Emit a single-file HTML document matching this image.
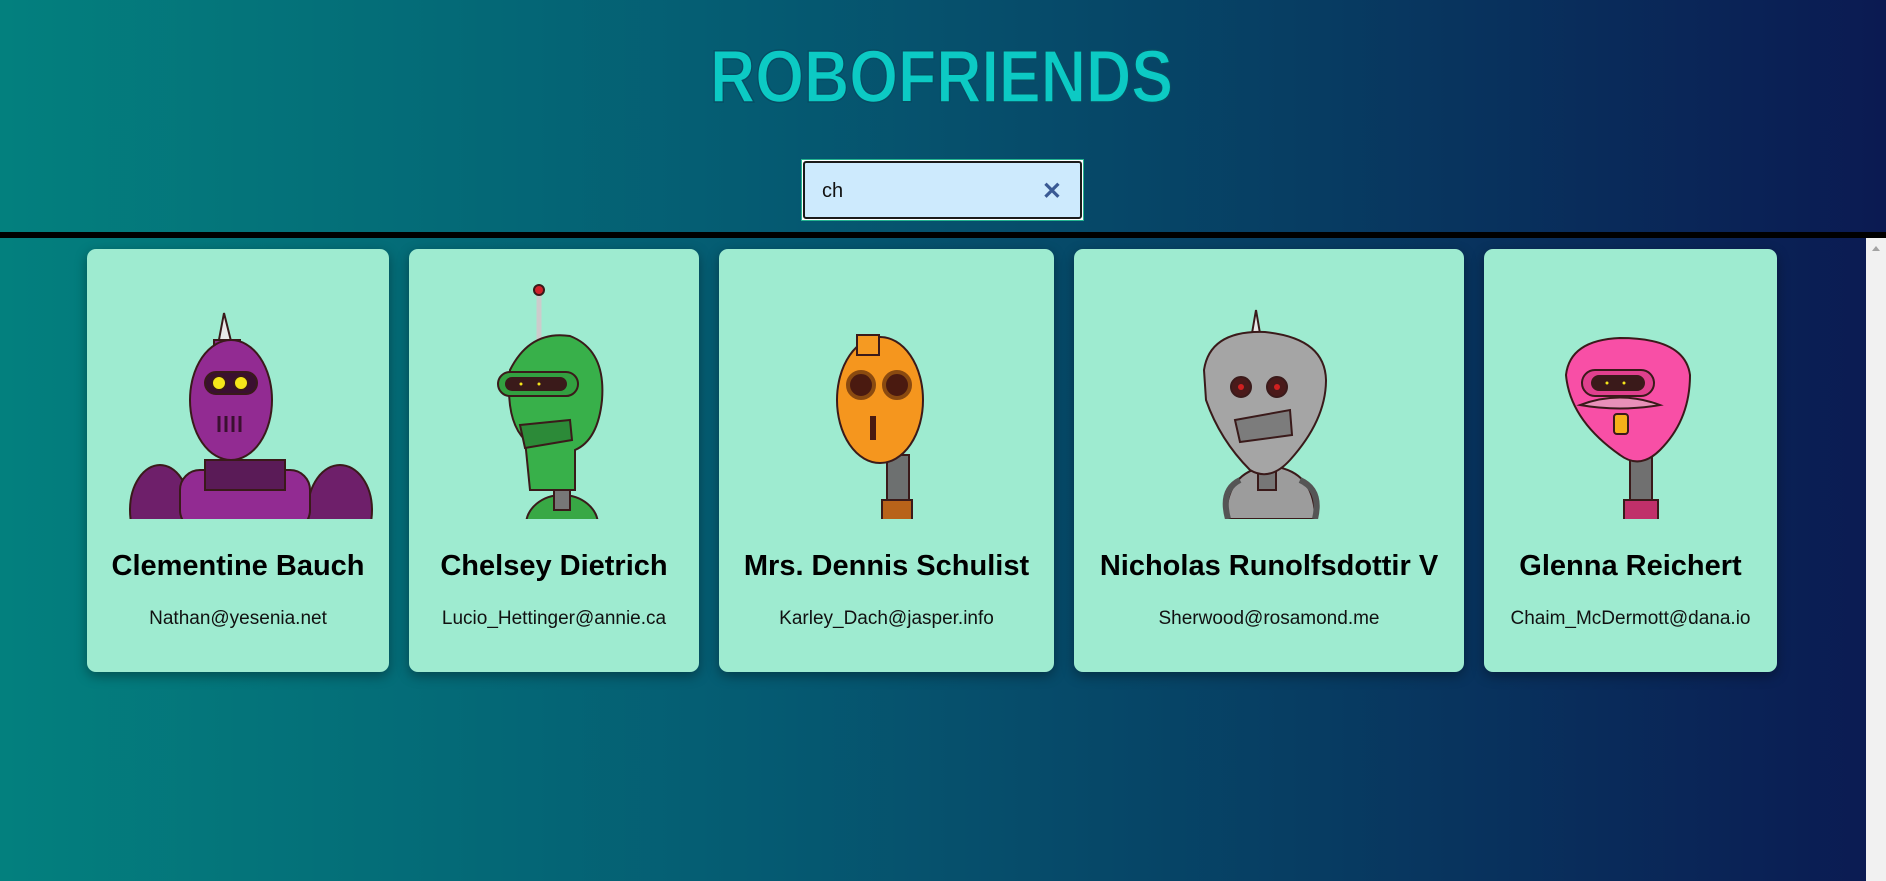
<!DOCTYPE html>
<html><head><meta charset="utf-8"><style>
*{margin:0;padding:0;box-sizing:border-box}
body{width:1886px;height:881px;overflow:hidden;position:relative;font-family:"Liberation Sans",sans-serif;background:linear-gradient(90deg,#03807e 0%,#055b72 40%,#073c62 70%,#0b1a52 100%)}
.line{position:absolute;left:0;top:232px;width:1886px;height:6px;background:#000}
.sb{position:absolute;left:1866px;top:238px;width:20px;height:643px;background:#f1f1f1}
.sb:before{content:"";position:absolute;left:6px;top:8px;border:4px solid transparent;border-bottom:5px solid #a3a3a3;border-top:0}
.search{position:absolute;left:801px;top:159px;width:283px;height:62px;border:1px solid #22b38f;background:#fff}
.search div{position:absolute;inset:1px;border:2px solid #1a1a1a;border-radius:3px;background:#cdeafd;font-size:20px;color:#111;padding:17px 0 0 17px}
.search span{position:absolute;right:18px;top:14px;color:#3a5a94;font-size:24px;font-weight:bold}
.card{position:absolute;top:249px;height:423px;background:#9eebd0;border-radius:9px;box-shadow:0 4px 12px rgba(0,0,0,.35);text-align:center}
.card h2{position:absolute;left:0;right:0;top:301px;font-size:29px;font-weight:bold;color:#000}
.card p{position:absolute;left:0;right:0;top:359px;font-size:19px;color:#111}
svg.r{position:absolute;left:0;top:0}
</style></head><body>
<svg style="position:absolute;left:700px;top:30px" width="490" height="80"><text x="10" y="72" font-family="Liberation Sans" font-weight="bold" font-size="74" textLength="463" lengthAdjust="spacingAndGlyphs" fill="#0ccac4" stroke="#064d63" stroke-width="1.5">ROBOFRIENDS</text></svg>
<div class="search"><div>ch<span>✕</span></div></div>
<div class="line"></div>
<div class="card" style="left:87px;width:302px"><h2>Clementine Bauch</h2><p>Nathan@yesenia.net</p></div>
<div class="card" style="left:409px;width:290px"><h2>Chelsey Dietrich</h2><p>Lucio_Hettinger@annie.ca</p></div>
<div class="card" style="left:719px;width:335px"><h2>Mrs. Dennis Schulist</h2><p>Karley_Dach@jasper.info</p></div>
<div class="card" style="left:1074px;width:390px"><h2>Nicholas Runolfsdottir V</h2><p>Sherwood@rosamond.me</p></div>
<div class="card" style="left:1484px;width:293px"><h2>Glenna Reichert</h2><p>Chaim_McDermott@dana.io</p></div>
<svg class="r" width="1886" height="881" stroke="#3a1a1a" stroke-width="2">
<defs><clipPath id="c"><rect x="0" y="0" width="1886" height="519"/></clipPath></defs>
<g clip-path="url(#c)">
<ellipse cx="160" cy="510" rx="30" ry="45" fill="#6e1f6a"/>
<ellipse cx="340" cy="510" rx="32" ry="45" fill="#6e1f6a"/>
<rect x="180" y="470" width="130" height="60" rx="20" fill="#922b92"/>
<rect x="205" y="460" width="80" height="30" fill="#5a1b57"/>
<polygon points="224,313 218,345 232,345" fill="#e8e8e8"/>
<rect x="214" y="340" width="26" height="12" fill="#8a2c88"/>
<ellipse cx="231" cy="400" rx="41" ry="60" fill="#922b92"/>
<rect x="205" y="372" width="52" height="22" rx="11" fill="#3a1030"/>
<circle cx="219" cy="383" r="7" fill="#f5e61a"/><circle cx="241" cy="383" r="7" fill="#f5e61a"/>
<g stroke="#3a1030" stroke-width="3"><line x1="219" y1="416" x2="219" y2="432"/><line x1="226" y1="416" x2="226" y2="432"/><line x1="233" y1="416" x2="233" y2="432"/><line x1="240" y1="416" x2="240" y2="432"/></g>
<ellipse cx="562" cy="525" rx="36" ry="30" fill="#38a845"/>
<rect x="554" y="440" width="16" height="70" fill="#777"/>
<line x1="539" y1="295" x2="539" y2="345" stroke="#ccc" stroke-width="5"/>
<circle cx="539" cy="290" r="5" fill="#d0202a"/>
<path d="M510 370 Q530 330 570 336 Q606 350 602 400 Q598 440 575 450 L575 490 L530 490 L525 440 Q505 420 510 370Z" fill="#38b04a"/>
<rect x="498" y="372" width="80" height="24" rx="12" fill="#32a040"/>
<rect x="506" y="378" width="60" height="12" rx="6" fill="#3a1a1a"/>
<circle cx="521" cy="384" r="2.5" fill="#f5e61a"/><circle cx="539" cy="384" r="2.5" fill="#f5e61a"/>
<path d="M520 425 L570 420 L572 440 L525 448Z" fill="#2c8a38"/>
<rect x="887" y="455" width="22" height="60" fill="#6d7070"/>
<rect x="882" y="500" width="30" height="30" fill="#b8631a"/>
<ellipse cx="880" cy="400" rx="43" ry="63" fill="#f5961e"/>
<rect x="857" y="335" width="22" height="20" fill="#f59a22"/>
<circle cx="861" cy="385" r="13" fill="#4a1a10" stroke="#8a4a10" stroke-width="4"/>
<circle cx="897" cy="385" r="13" fill="#4a1a10" stroke="#8a4a10" stroke-width="4"/>
<rect x="870" y="416" width="6" height="24" fill="#4a1a10" stroke="none"/>
<path d="M1226 519 Q1226 470 1270 466 Q1315 470 1315 519Z" fill="#9c9c9c"/>
<path d="M1228 519 Q1220 490 1240 480 M1315 519 Q1322 490 1300 480" fill="none" stroke="#555" stroke-width="6"/>
<rect x="1258" y="460" width="18" height="30" fill="#777"/>
<polygon points="1256,310 1250,345 1262,345" fill="#e8e8e8"/>
<path d="M1204 370 Q1210 330 1265 332 Q1325 338 1326 380 Q1326 420 1290 460 Q1270 482 1250 470 Q1220 440 1206 400Z" fill="#a5a5a5"/>
<circle cx="1241" cy="387" r="10" fill="#4a1a1a"/><circle cx="1277" cy="387" r="10" fill="#4a1a1a"/>
<circle cx="1241" cy="387" r="3" fill="#d02020" stroke="none"/><circle cx="1277" cy="387" r="3" fill="#d02020" stroke="none"/>
<path d="M1235 420 L1290 410 L1292 435 L1240 442Z" fill="#7c7c7c"/>
<rect x="1630" y="455" width="22" height="55" fill="#707070"/>
<rect x="1624" y="500" width="34" height="25" fill="#c0306a"/>
<path d="M1566 375 Q1570 340 1620 338 Q1685 338 1690 375 Q1690 420 1660 450 Q1640 470 1620 455 Q1570 420 1566 375Z" fill="#f84fa6"/>
<rect x="1582" y="370" width="72" height="26" rx="13" fill="#e0408e"/>
<rect x="1592" y="376" width="52" height="14" rx="7" fill="#3a1a1a"/>
<circle cx="1607" cy="383" r="2.5" fill="#f5e61a"/><circle cx="1624" cy="383" r="2.5" fill="#f5e61a"/>
<path d="M1580 405 Q1620 390 1660 405 Q1620 412 1580 405Z" fill="#e890b8"/>
<rect x="1614" y="414" width="14" height="20" rx="3" fill="#f5b01a"/>
</g>
</svg>
<div class="sb"></div>
</body></html>
